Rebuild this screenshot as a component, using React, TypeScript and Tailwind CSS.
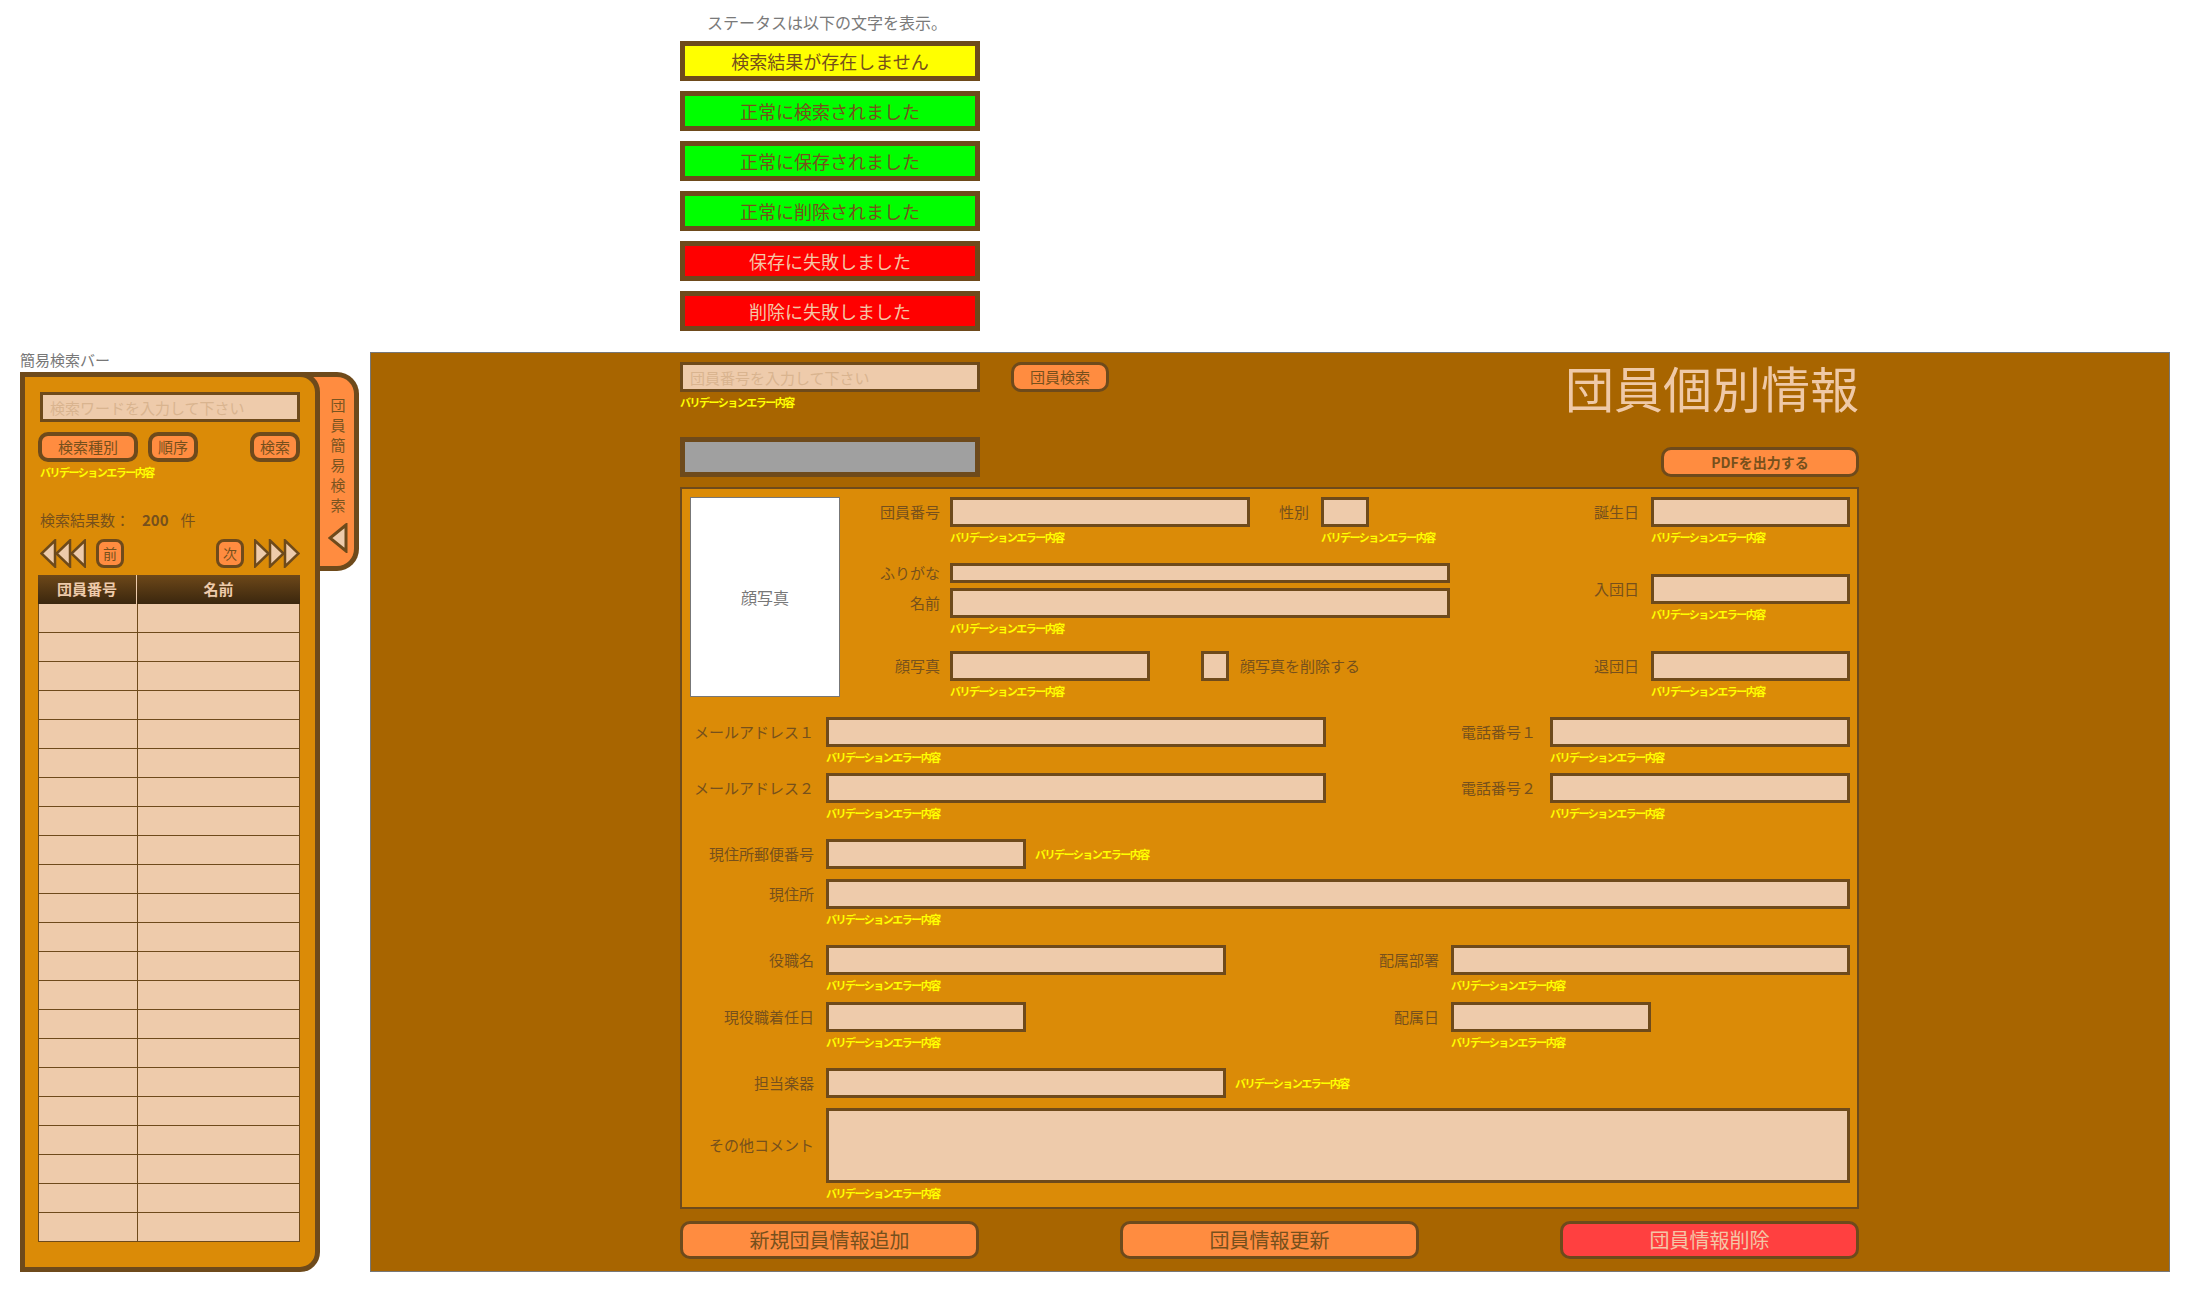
import React from "react";

type Status = { text: string; className: string };

const statuses: Status[] = [
    { text: "検索結果が存在しません", className: "bg-[#ffff00] text-[#76501c]" },
    { text: "正常に検索されました", className: "bg-[#00ff00] text-[#76501c]" },
    { text: "正常に保存されました", className: "bg-[#00ff00] text-[#76501c]" },
    { text: "正常に削除されました", className: "bg-[#00ff00] text-[#76501c]" },
    { text: "保存に失敗しました", className: "bg-[#ff0000] text-[#f4c6a6]" },
    { text: "削除に失敗しました", className: "bg-[#ff0000] text-[#f4c6a6]" },
];

const Validation: React.FC<{ className?: string }> = ({ className = "" }) => (
    <div
        className={`h-[12px] whitespace-nowrap text-[11px] font-bold leading-[12px] tracking-[-1.5px] text-[#ffff00] ${className}`}
    >
        バリデーションエラー内容
    </div>
);

declare namespace Field {
    export interface Props {
        label: string;
        labelW: string;
        gap: string;
        h?: string;
        w: string;
        valid?: "below" | "right" | "none";
        multiline?: boolean;
    }
}

const Field: React.FC<Field.Props> = ({ label, labelW, gap, h = "h-[30px]", w, valid = "below", multiline }) => (
    <div className="flex items-start">
        <div
            className={`flex shrink-0 items-center justify-end whitespace-nowrap text-[15px] text-[#76501c] ${labelW} ${h}`}
        >
            {label}
        </div>
        <div className={`flex shrink-0 flex-col ${gap}`}>
            {multiline ? (
                <textarea
                    className={`resize-none border-[3px] border-[#6e4a1b] bg-[#eecbab] outline-none ${w} ${h}`}
                />
            ) : (
                <input className={`border-[3px] border-[#6e4a1b] bg-[#eecbab] outline-none ${w} ${h}`} />
            )}
            {valid === "below" && <Validation className="mt-[4px]" />}
        </div>
        {valid === "right" && (
            <div className={`ml-[9px] flex items-center ${h}`}>
                <Validation />
            </div>
        )}
    </div>
);

const Arrows: React.FC<{ dir: "left" | "right" }> = ({ dir }) => {
    const points = [0, 15, 30].map((x) =>
        dir === "left"
            ? `${x + 15},1.5 ${x + 1.5},14.5 ${x + 15},27.5`
            : `${x + 1},1.5 ${x + 14.5},14.5 ${x + 1},27.5`
    );
    return (
        <svg width="46" height="29" viewBox="0 0 46 29">
            {points.map((p, i) => (
                <polygon key={i} points={p} fill="#eecbab" stroke="#6e4a1b" strokeWidth="2.5" />
            ))}
        </svg>
    );
};

const NavButton: React.FC<{ children: React.ReactNode; className?: string }> = ({ children, className = "" }) => (
    <button
        className={`flex h-[29px] w-[28px] items-center justify-center rounded-[8px] border-[3px] border-[#6e4a1b] bg-[#ff8c40] text-[14px] text-[#76501c] ${className}`}
    >
        {children}
    </button>
);

const SmallButton: React.FC<{ children: React.ReactNode; className?: string }> = ({ children, className = "" }) => (
    <button
        className={`flex h-[30px] items-center justify-center rounded-[10px] border-[4px] border-[#6e4a1b] bg-[#ff8c40] text-[15px] text-[#76501c] ${className}`}
    >
        {children}
    </button>
);

const StatusList: React.FC = () => (
    <div className="h-[352px] pl-[680px] pt-[10px]">
        <div className="ml-[27px] text-[16px] leading-[24px] text-[#7a7a7a]">ステータスは以下の文字を表示。</div>
        <div className="mt-[7px] flex flex-col gap-[10px]">
            {statuses.map((s) => (
                <div
                    key={s.text}
                    className={`flex h-[40px] w-[300px] items-center justify-center border-[5px] border-[#6e4a1b] text-[18px] ${s.className}`}
                >
                    {s.text}
                </div>
            ))}
        </div>
    </div>
);

const SearchSidebar: React.FC = () => {
    const rows = Array.from({ length: 22 }, (_, i) => i);
    return (
        <div className="ml-[20px] w-[350px] shrink-0">
            <div className="h-[20px] text-[15px] leading-[16px] text-[#777777]">簡易検索バー</div>
            <div className="flex items-start">
                <div className="relative z-10 h-[900px] w-[300px] shrink-0 rounded-r-[20px] border-[5px] border-[#6e4a1b] bg-[#db8b07] pl-[13px] pr-[15px] pt-[15px]">
                    <input
                        placeholder="検索ワードを入力して下さい"
                        className="ml-[2px] h-[30px] w-[260px] border-[3px] border-[#6e4a1b] bg-[#eecbab] px-[7px] text-[15px] outline-none placeholder:text-[#d9b48f]"
                    />
                    <div className="mt-[10px] flex">
                        <SmallButton className="w-[100px]">検索種別</SmallButton>
                        <SmallButton className="ml-[10px] w-[50px]">順序</SmallButton>
                        <SmallButton className="ml-auto w-[50px]">検索</SmallButton>
                    </div>
                    <Validation className="ml-[2px] mt-[4px]" />
                    <div className="ml-[2px] mt-[32px] flex h-[20px] items-center text-[15px] text-[#76501c]">
                        <span>検索結果数：</span>
                        <span className="ml-[12px] font-bold">200</span>
                        <span className="ml-[12px]">件</span>
                    </div>
                    <div className="ml-[2px] mt-[9px] flex h-[29px] items-center">
                        <Arrows dir="left" />
                        <NavButton className="ml-[10px]">前</NavButton>
                        <NavButton className="ml-auto">次</NavButton>
                        <div className="ml-[10px]">
                            <Arrows dir="right" />
                        </div>
                    </div>
                    <div className="mt-[7px] w-[262px]">
                        <div className="grid h-[29px] grid-cols-[99px_1fr] bg-linear-to-b from-[#6e4819] to-[#3b270e] text-[15px] font-bold text-[#eecbab]">
                            <div className="flex items-center justify-center border-r border-[#eecbab]">団員番号</div>
                            <div className="flex items-center justify-center">名前</div>
                        </div>
                        {rows.map((r) => (
                            <div
                                key={r}
                                className="grid h-[29px] grid-cols-[99px_1fr] border-x border-b border-[#6e4a1b] bg-[#eecbab]"
                            >
                                <div className="border-r border-[#6e4a1b]" />
                                <div />
                            </div>
                        ))}
                    </div>
                </div>
                <div className="-ml-[20px] flex h-[199px] w-[59px] shrink-0 flex-col items-center rounded-r-[22px] border-[5px] border-l-0 border-[#6e4a1b] bg-[#ff8c40] pl-[22px] pt-[18px]">
                    {"団員簡易検索".split("").map((c, i) => (
                        <div key={i} className="h-[20px] text-[15px] leading-[20px] text-[#7a5420]">
                            {c}
                        </div>
                    ))}
                    <svg className="mt-[8px]" width="20" height="30" viewBox="0 0 20 30">
                        <polygon points="18,2 2,15 18,28" fill="#eecbab" stroke="#6e4a1b" strokeWidth="3" />
                    </svg>
                </div>
            </div>
        </div>
    );
};

const MemberPanel: React.FC = () => (
    <div className="h-[920px] w-[1800px] shrink-0 border border-[#777777] bg-[#a86500] pl-[309px] pt-[9px]">
        <div className="w-[1179px]">
            <div className="flex justify-between">
                <div>
                    <div className="flex">
                        <input
                            placeholder="団員番号を入力して下さい"
                            className="h-[30px] w-[300px] border-[3px] border-[#6e4a1b] bg-[#eecbab] px-[7px] text-[15px] outline-none placeholder:text-[#d9b48f]"
                        />
                        <button className="ml-[31px] flex h-[30px] w-[98px] items-center justify-center rounded-[10px] border-[3px] border-[#6e4a1b] bg-[#ff8c40] text-[15px] text-[#76501c]">
                            団員検索
                        </button>
                    </div>
                    <Validation className="mt-[4px]" />
                    <div className="mt-[29px] h-[40px] w-[300px] border-[5px] border-[#6e4a1b] bg-[#a0a0a0]" />
                </div>
                <div className="flex flex-col items-end">
                    <div className="text-[49px] leading-[49px] text-[#efc9a7]">団員個別情報</div>
                    <button className="mt-[36px] flex h-[30px] w-[198px] items-center justify-center rounded-[10px] border-[3px] border-[#6e4a1b] bg-[#ff8c40] text-[14px] font-bold text-[#76501c]">
                        PDFを出力する
                    </button>
                </div>
            </div>

            <div className="mt-[10px] h-[722px] border-[2px] border-[#6e4a1b] bg-[#db8b07] pl-[8px] pt-[8px]">
                <div className="flex">
                    <div className="flex h-[200px] w-[150px] shrink-0 items-center justify-center border border-[#777777] bg-white text-[16px] text-[#777777]">
                        顔写真
                    </div>
                    <div className="w-[720px] shrink-0">
                        <div className="flex">
                            <Field label="団員番号" labelW="w-[100px]" gap="ml-[10px]" w="w-[300px]" />
                            <Field label="性別" labelW="w-[59px]" gap="ml-[12px]" w="w-[48px]" />
                        </div>
                        <div className="mt-[20px]">
                            <Field label="ふりがな" labelW="w-[100px]" gap="ml-[10px]" h="h-[20px]" w="w-[500px]" valid="none" />
                        </div>
                        <div className="mt-[5px]">
                            <Field label="名前" labelW="w-[100px]" gap="ml-[10px]" w="w-[500px]" />
                        </div>
                        <div className="mt-[17px] flex items-start">
                            <Field label="顔写真" labelW="w-[100px]" gap="ml-[10px]" w="w-[200px]" />
                            <div className="ml-[51px] h-[30px] w-[28px] border-[3px] border-[#6e4a1b] bg-[#eecbab]" />
                            <div className="ml-[11px] flex h-[30px] items-center text-[15px] text-[#76501c]">顔写真を削除する</div>
                        </div>
                    </div>
                    <div>
                        <Field label="誕生日" labelW="w-[79px]" gap="ml-[12px]" w="w-[199px]" />
                        <div className="mt-[31px]">
                            <Field label="入団日" labelW="w-[79px]" gap="ml-[12px]" w="w-[199px]" />
                        </div>
                        <div className="mt-[31px]">
                            <Field label="退団日" labelW="w-[79px]" gap="ml-[12px]" w="w-[199px]" />
                        </div>
                    </div>
                </div>

                <div className="mt-[20px]">
                    <div className="flex">
                        <div className="w-[740px] shrink-0">
                            <Field label="メールアドレス１" labelW="w-[124px]" gap="ml-[12px]" w="w-[500px]" />
                        </div>
                        <Field label="電話番号１" labelW="w-[106px]" gap="ml-[14px]" w="w-[300px]" />
                    </div>
                    <div className="mt-[10px] flex">
                        <div className="w-[740px] shrink-0">
                            <Field label="メールアドレス２" labelW="w-[124px]" gap="ml-[12px]" w="w-[500px]" />
                        </div>
                        <Field label="電話番号２" labelW="w-[106px]" gap="ml-[14px]" w="w-[300px]" />
                    </div>
                    <div className="mt-[20px]">
                        <Field label="現住所郵便番号" labelW="w-[124px]" gap="ml-[12px]" w="w-[200px]" valid="right" />
                    </div>
                    <div className="mt-[10px]">
                        <Field label="現住所" labelW="w-[124px]" gap="ml-[12px]" w="w-[1024px]" />
                    </div>
                    <div className="mt-[20px] flex">
                        <div className="w-[650px] shrink-0">
                            <Field label="役職名" labelW="w-[124px]" gap="ml-[12px]" w="w-[400px]" />
                        </div>
                        <Field label="配属部署" labelW="w-[99px]" gap="ml-[12px]" w="w-[399px]" />
                    </div>
                    <div className="mt-[11px] flex">
                        <div className="w-[650px] shrink-0">
                            <Field label="現役職着任日" labelW="w-[124px]" gap="ml-[12px]" w="w-[200px]" />
                        </div>
                        <Field label="配属日" labelW="w-[99px]" gap="ml-[12px]" w="w-[200px]" />
                    </div>
                    <div className="mt-[20px]">
                        <Field label="担当楽器" labelW="w-[124px]" gap="ml-[12px]" w="w-[400px]" valid="right" />
                    </div>
                    <div className="mt-[10px]">
                        <Field
                            label="その他コメント"
                            labelW="w-[124px]"
                            gap="ml-[12px]"
                            h="h-[75px]"
                            w="w-[1024px]"
                            multiline
                        />
                    </div>
                </div>
            </div>

            <div className="mt-[12px] flex justify-between">
                <button className="flex h-[38px] w-[299px] items-center justify-center rounded-[10px] border-[3px] border-[#6e4a1b] bg-[#ff8c40] text-[20px] text-[#76501c]">
                    新規団員情報追加
                </button>
                <button className="flex h-[38px] w-[299px] items-center justify-center rounded-[10px] border-[3px] border-[#6e4a1b] bg-[#ff8c40] text-[20px] text-[#76501c]">
                    団員情報更新
                </button>
                <button className="flex h-[38px] w-[299px] items-center justify-center rounded-[10px] border-[3px] border-[#6e4a1b] bg-[#ff4040] text-[20px] text-[#f4c6a6]">
                    団員情報削除
                </button>
            </div>
        </div>
    </div>
);

export default function App() {
    return (
        <div className="w-[2192px] bg-white font-['Noto_Sans_CJK_JP',sans-serif]">
            <StatusList />
            <div className="flex">
                <SearchSidebar />
                <MemberPanel />
            </div>
        </div>
    );
}
